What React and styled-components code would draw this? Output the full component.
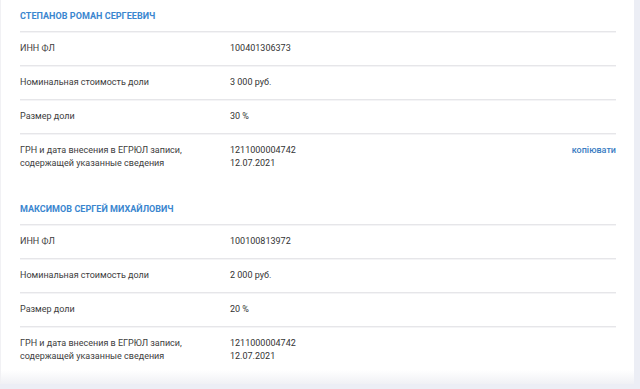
import React from "react";
import styled, { createGlobalStyle } from "styled-components";

const GlobalStyle = createGlobalStyle`
  html, body {
    margin: 0;
    padding: 0;
    background: #eceef5;
  }
  body {
    font-family: Roboto, "Liberation Sans", Arial, sans-serif;
    -webkit-font-smoothing: antialiased;
  }
`;

const founders = [
  {
    name: "СТЕПАНОВ РОМАН СЕРГЕЕВИЧ",
    inn: "100401306373",
    cost: "3 000 руб.",
    share: "30 %",
    grn: "1211000004742",
    date: "12.07.2021",
    copy: true,
  },
  {
    name: "МАКСИМОВ СЕРГЕЙ МИХАЙЛОВИЧ",
    inn: "100100813972",
    cost: "2 000 руб.",
    share: "20 %",
    grn: "1211000004742",
    date: "12.07.2021",
    copy: false,
  },
];

export default function App() {
  return (
    <>
      <GlobalStyle />
      <Card>
        {founders.map((f) => (
          <Section key={f.name}>
            <Heading>{f.name}</Heading>
            <Row>
              <Label>ИНН ФЛ</Label>
              <Value>{f.inn}</Value>
            </Row>
            <Row>
              <Label>Номинальная стоимость доли</Label>
              <Value>{f.cost}</Value>
            </Row>
            <Row>
              <Label>Размер доли</Label>
              <Value>{f.share}</Value>
            </Row>
            <Row $multi>
              <Label>
                ГРН и дата внесения в ЕГРЮЛ записи,
                <br />
                содержащей указанные сведения
              </Label>
              <Value>
                {f.grn}
                <br />
                {f.date}
              </Value>
              {f.copy && <CopyLink>копіювати</CopyLink>}
            </Row>
          </Section>
        ))}
        <Fade />
      </Card>
    </>
  );
}

const Card = styled.div`
  position: relative;
  width: 634px;
  box-sizing: border-box;
  background: #fff;
  border-left: 1px solid #f1f1f4;
  padding: 0 18px 11px 19px;
`;

const Section = styled.section`
  & + & {
    margin-top: 13px;
  }
`;

const Heading = styled.div`
  padding: 10px 0 8px;
  line-height: 13px;
  font-size: 9px;
  font-weight: 700;
  color: #3a86cf;
  letter-spacing: 0.05px;
`;

const Row = styled.div`
  display: grid;
  grid-template-columns: 210px 1fr auto;
  align-items: ${(p) => (p.$multi ? "start" : "center")};
  height: ${(p) => (p.$multi ? "auto" : "33px")};
  padding: ${(p) => (p.$multi ? "10px 0" : "0")};
  border-top: 1px solid #e6e6e9;
  box-shadow: inset 0 1px 0 #f4f4f6;
  font-size: 9px;
  line-height: 13px;
  color: #333;
`;

const Label = styled.div`
  color: #3d3d3d;
`;

const Value = styled.div`
  color: #333;
`;

const CopyLink = styled.a`
  color: #3a7cc2;
  font-weight: 500;
  cursor: pointer;
`;

const Fade = styled.div`
  position: absolute;
  left: 0;
  right: 0;
  bottom: 0;
  height: 14px;
  background: linear-gradient(to bottom, rgba(240, 240, 244, 0), rgba(236, 237, 242, 0.8));
  pointer-events: none;
`;
